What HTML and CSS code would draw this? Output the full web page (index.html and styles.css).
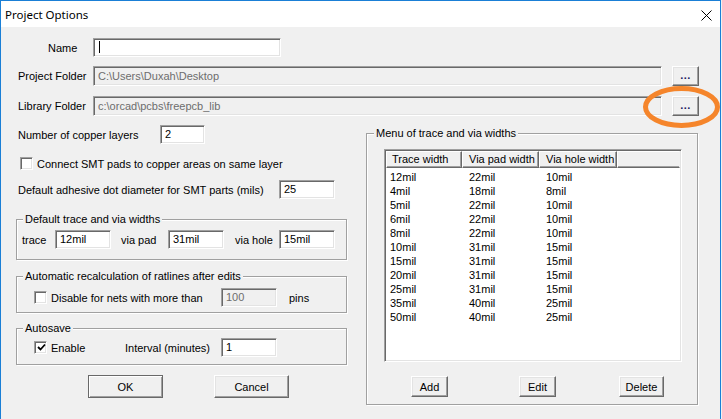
FILE: index.html
```html
<!DOCTYPE html>
<html>
<head>
<meta charset="utf-8">
<title>Project Options</title>
<link rel="stylesheet" href="styles.css">
</head>
<body>
<div class="window">
  <div class="titlebar">
    <span class="title">Project Options</span>
    <svg class="close" width="11" height="11" viewBox="0 0 11 11"><path d="M0.5 0.5 L10.5 10.5 M10.5 0.5 L0.5 10.5" stroke="#000" stroke-width="1" fill="none"/></svg>
  </div>
  <div class="client">
    <div class="row row-name">
      <span class="lbl lbl-name">Name</span>
      <div class="edit w-name"><span class="caret"></span></div>
    </div>
    <div class="row row-proj">
      <span class="lbl">Project Folder</span>
      <div class="edit disabled w-folder">C:\Users\Duxah\Desktop</div>
      <div class="btn dots">...</div>
    </div>
    <div class="row row-lib">
      <span class="lbl">Library Folder</span>
      <div class="edit disabled w-folder">c:\orcad\pcbs\freepcb_lib</div>
      <div class="btn dots">...</div>
    </div>

    <div class="main">
      <div class="left">
        <div class="row row-copper">
          <span class="lbl-copper">Number of copper layers</span>
          <div class="edit w45">2</div>
        </div>
        <div class="row row-chk">
          <span class="chk"></span>
          <span class="chk-label">Connect SMT pads to copper areas on same layer</span>
        </div>
        <div class="row row-adh">
          <span class="lbl-adh">Default adhesive dot diameter for SMT parts (mils)</span>
          <div class="edit w56">25</div>
        </div>

        <div class="group g1">
          <span class="legend">Default trace and via widths</span>
          <div class="row">
            <span class="l-trace">trace</span>
            <div class="edit w56">12mil</div>
            <span class="l-viapad">via pad</span>
            <div class="edit w56">31mil</div>
            <span class="l-viahole">via hole</span>
            <div class="edit w56">15mil</div>
          </div>
        </div>

        <div class="group g2">
          <span class="legend">Automatic recalculation of ratlines after edits</span>
          <div class="row">
            <span class="chk"></span>
            <span class="l-disable">Disable for nets with more than</span>
            <div class="edit disabled w56">100</div>
            <span class="l-pins">pins</span>
          </div>
        </div>

        <div class="group g3">
          <span class="legend">Autosave</span>
          <div class="row">
            <span class="chk checked"><svg width="9" height="9" viewBox="0 0 9 9"><path d="M1 4 L3.5 6.5 L8 1.5" stroke="#000" stroke-width="1.8" fill="none"/></svg></span>
            <span class="l-enable">Enable</span>
            <span class="l-interval">Interval (minutes)</span>
            <div class="edit w56">1</div>
          </div>
        </div>

        <div class="row row-ok">
          <div class="btn btn-default b-ok">OK</div>
          <div class="btn b-cancel">Cancel</div>
        </div>
      </div>

      <div class="right">
        <div class="group g-menu">
          <span class="legend">Menu of trace and via widths</span>
          <div class="listview">
            <div class="lv-header">
              <span class="hd c1">Trace width</span>
              <span class="hd c2">Via pad width</span>
              <span class="hd c3">Via hole width</span>
              <span class="hd c4"></span>
            </div>
            <div class="lv-rows">
              <div class="lv-row"><span>12mil</span><span>22mil</span><span>10mil</span></div>
              <div class="lv-row"><span>4mil</span><span>18mil</span><span>8mil</span></div>
              <div class="lv-row"><span>5mil</span><span>22mil</span><span>10mil</span></div>
              <div class="lv-row"><span>6mil</span><span>22mil</span><span>10mil</span></div>
              <div class="lv-row"><span>8mil</span><span>22mil</span><span>10mil</span></div>
              <div class="lv-row"><span>10mil</span><span>31mil</span><span>15mil</span></div>
              <div class="lv-row"><span>15mil</span><span>31mil</span><span>15mil</span></div>
              <div class="lv-row"><span>20mil</span><span>31mil</span><span>15mil</span></div>
              <div class="lv-row"><span>25mil</span><span>31mil</span><span>15mil</span></div>
              <div class="lv-row"><span>35mil</span><span>40mil</span><span>25mil</span></div>
              <div class="lv-row"><span>50mil</span><span>40mil</span><span>25mil</span></div>
            </div>
          </div>
          <div class="row row-lvbtns">
            <div class="btn b-add">Add</div>
            <div class="btn b-edit">Edit</div>
            <div class="btn b-del">Delete</div>
          </div>
        </div>
      </div>
    </div>
  </div>

  <svg class="annot" width="82" height="48" viewBox="0 0 82 48"><ellipse cx="40.5" cy="23" rx="36" ry="18.5" fill="none" stroke="#f5852b" stroke-width="5"/></svg>
</div>
</body>
</html>
```

FILE: styles.css
```css
* { box-sizing: border-box; }

html, body {
  margin: 0;
  padding: 0;
  background: #f0f0f0;
}

body {
  width: 722px;
  height: 419px;
  overflow: hidden;
  font-family: "Liberation Sans", Arial, sans-serif;
  font-size: 11px;
  color: #000;
}

.window {
  position: relative;
  width: 721px;
  height: 419px;
  border: 1px solid #1a7fd6;
  border-bottom: none;
  background: #f0f0f0;
}

.titlebar {
  height: 26px;
  background: #fff;
  display: flex;
  align-items: center;
  justify-content: space-between;
  padding: 0 8px 0 4px;
}

.title {
  font-family: "Noto Sans", "Liberation Sans", sans-serif;
  font-size: 11.5px;
  margin-top: 1px;
}

.close { display: block; margin-top: 2px; }

.row {
  display: flex;
  align-items: center;
}

/* text edits */
.edit {
  height: 19px;
  background: #fff;
  border: 1px solid;
  border-color: #a0a0a0 #fff #fff #a0a0a0;
  box-shadow: inset 1px 1px 0 #696969, inset -1px -1px 0 #e3e3e3;
  padding: 0 0 0 4px;
  line-height: 17px;
  white-space: nowrap;
  overflow: hidden;
  flex: none;
}
.edit.disabled { background: #f0f0f0; color: #6d6d6d; }

.caret {
  display: inline-block;
  width: 1px;
  height: 12px;
  background: #000;
  vertical-align: middle;
  margin-left: 1px;
  margin-top: -2px;
}

.w-name { width: 188px; }
.w-folder { width: 569px; height: 20px; line-height: 18px; }
.w45 { width: 45px; }
.w56 { width: 56px; }

/* top rows */
.lbl { width: 92px; padding-left: 17px; flex: none; }
.lbl-name { padding-left: 47px; }
.row-name { margin-top: 11px; }
.row-proj { margin-top: 9px; }
.row-lib { margin-top: 10px; }

/* buttons */
.btn {
  flex: none;
  display: flex;
  align-items: center;
  justify-content: center;
  background: #f0f0f0;
  border: 1px solid;
  border-color: #fff #696969 #696969 #fff;
  box-shadow: inset -1px -1px 0 #a0a0a0, inset 1px 1px 0 #e3e3e3;
}
.btn-default {
  border-color: #696969;
  box-shadow: inset 1px 1px 0 #fff, inset -1px -1px 0 #a0a0a0;
}
.dots {
  width: 27px;
  height: 20px;
  margin-left: 10px;
  color: #202060;
  padding-bottom: 3px;
  font-weight: bold;
  letter-spacing: 0.5px;
}

/* main two columns */
.main {
  display: flex;
  align-items: flex-start;
}
.left {
  width: 331px;
  margin-left: 15px;
  flex: none;
}
.right {
  width: 332px;
  margin-left: 19px;
  flex: none;
}

.row-copper { margin-top: 9px; }
.lbl-copper { width: 144px; padding-left: 2px; flex: none; }

.chk {
  width: 13px;
  height: 13px;
  flex: none;
  background: #fff;
  border: 1px solid;
  border-color: #a0a0a0 #fff #fff #a0a0a0;
  box-shadow: inset 1px 1px 0 #696969, inset -1px -1px 0 #e3e3e3;
  display: flex;
  align-items: center;
  justify-content: center;
}
.chk svg { display: block; margin: 0 0 0 1px; }

.row-chk { margin-top: 13px; height: 13px; }
.row-chk .chk { margin-left: 4px; }
.chk-label { margin-left: 4px; }

.row-adh { margin-top: 10px; }
.lbl-adh { width: 263px; padding-left: 2px; flex: none; }

/* group boxes */
.group {
  position: relative;
  border: 1px solid #a0a0a0;
  box-shadow: 1px 1px 0 #fff, inset 1px 1px 0 #fff;
}
.legend {
  position: absolute;
  left: 6px;
  top: -7px;
  line-height: 13px;
  padding: 0 2px;
  background: #f0f0f0;
  white-space: nowrap;
}

.g1 { margin-top: 20px; height: 41px; padding: 10px 0 0 5px; }
.l-trace { width: 33px; flex: none; }
.l-viapad { width: 57px; padding-left: 10px; flex: none; }
.l-viahole { width: 55px; padding-left: 11px; flex: none; }

.g2 { margin-top: 16px; height: 37px; padding: 11px 0 0 17px; }
.l-disable { width: 174px; padding-left: 4px; flex: none; }
.l-pins { margin-left: 12px; }

.g3 { margin-top: 15px; height: 37px; padding: 9px 0 0 17px; }
.l-enable { width: 78px; padding-left: 4px; flex: none; }
.l-interval { width: 96px; flex: none; }

.row-ok { margin-top: 10px; }
.b-ok { width: 75px; height: 23px; margin-left: 72px; }
.b-cancel { width: 75px; height: 23px; margin-left: 51px; }

/* menu group */
.g-menu {
  margin-top: 17px;
  height: 272px;
  padding: 15px 0 0 17px;
}
.g-menu .legend { left: 7px; }

.listview {
  width: 298px;
  height: 213px;
  background: #fff;
  border: 1px solid;
  border-color: #a0a0a0 #fff #fff #a0a0a0;
  box-shadow: inset 1px 1px 0 #696969, inset -1px -1px 0 #e3e3e3;
  padding: 1px;
}
.lv-header {
  display: flex;
  height: 17px;
  background: #f0f0f0;
}
.hd {
  flex: none;
  height: 17px;
  line-height: 15px;
  padding-left: 5px;
  border: 1px solid;
  border-color: #fff #696969 #696969 #fff;
  box-shadow: inset -1px -1px 0 #a0a0a0;
  white-space: nowrap;
}
.c1 { width: 76px; }
.c2 { width: 77px; padding-left: 6px; }
.c3 { width: 78px; padding-left: 6px; }
.c4 { flex: 1; border-right-color: #f0f0f0; box-shadow: inset 0 -1px 0 #a0a0a0; }

.lv-rows { padding: 2px 0 0 4px; }
.lv-row {
  display: grid;
  grid-template-columns: 79px 77px 1fr;
  height: 14px;
  line-height: 14px;
}

.row-lvbtns { margin-top: 14px; }
.b-add { width: 37px; height: 21px; margin-left: 27px; }
.b-edit { width: 37px; height: 21px; margin-left: 71px; }
.b-del { width: 45px; height: 21px; margin-left: 63px; }

/* annotation drawn over the dialog */
.annot {
  position: absolute;
  left: 640px;
  top: 83px;
}
```
